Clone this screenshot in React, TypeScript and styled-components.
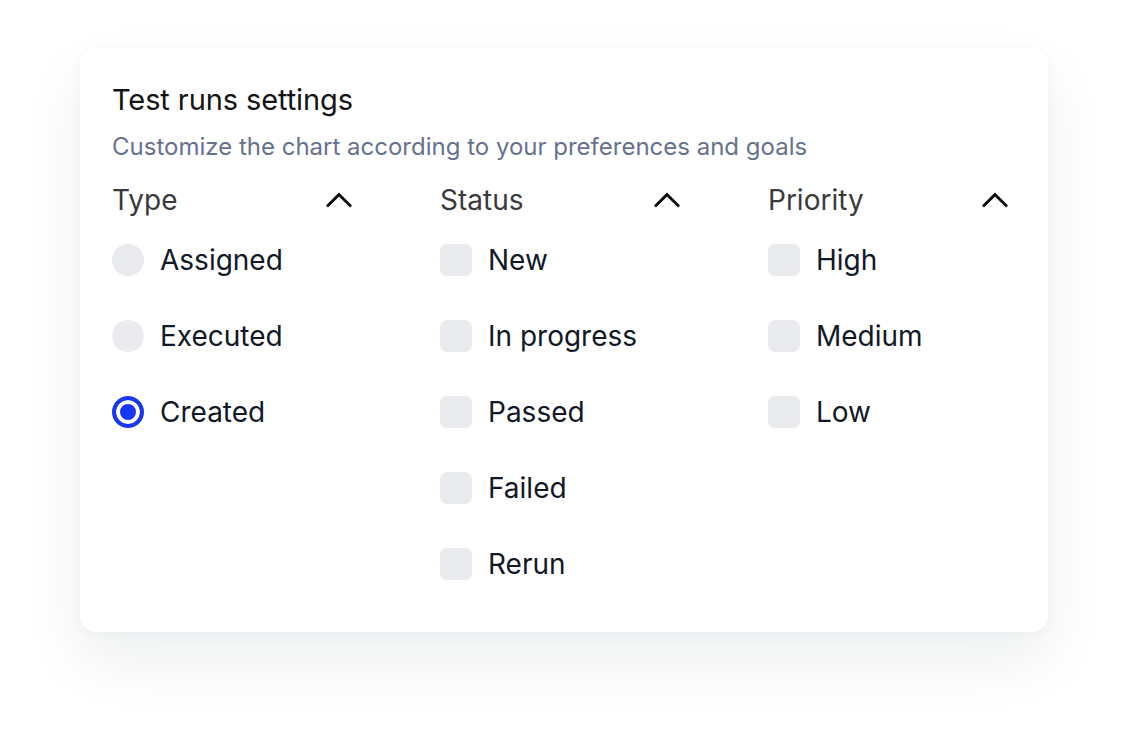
import styled, { createGlobalStyle } from "styled-components";

const GlobalStyle = createGlobalStyle`
  html, body {
    margin: 0;
    padding: 0;
    background: #ffffff;
  }
  body {
    font-family: Inter, "Noto Sans", "Liberation Sans", sans-serif;
    -webkit-font-smoothing: antialiased;
  }
`;

const Page = styled.div`
  width: 1128px;
  height: 744px;
  padding: 48px 80px 0;
  box-sizing: border-box;
`;

const Card = styled.section`
  background: #ffffff;
  border-radius: 16px;
  box-shadow: 0 28px 64px rgba(20, 24, 40, 0.07), 0 2px 12px rgba(20, 24, 40, 0.03);
  padding: 34px 40px 50px 32px;
  display: flex;
  flex-direction: column;
`;

const Title = styled.h2`
  margin: 0;
  font-size: 29px;
  line-height: 36px;
  font-weight: 400;
  color: #141416;
  letter-spacing: -0.1px;
`;

const Subtitle = styled.p`
  margin: 13px 0 0;
  font-size: 24px;
  line-height: 32px;
  font-weight: 400;
  color: #667190;
`;

const Columns = styled.div`
  margin-top: 19px;
  display: grid;
  grid-template-columns: repeat(3, 1fr);
  column-gap: 88px;
`;

const Column = styled.div`
  display: flex;
  flex-direction: column;
`;

const ColumnHeader = styled.button`
  all: unset;
  display: flex;
  align-items: center;
  justify-content: space-between;
  height: 36px;
  font-size: 28px;
  color: #3a3a3e;
  font-weight: 400;
  cursor: pointer;
`;

const OptionList = styled.div`
  margin-top: 24px;
  display: flex;
  flex-direction: column;
  gap: 40px;
`;

const Option = styled.label`
  display: flex;
  align-items: center;
  gap: 16px;
  height: 36px;
  font-size: 28px;
  color: #111827;
  cursor: pointer;
`;

const Radio = styled.span<{ $checked?: boolean }>`
  width: 32px;
  height: 32px;
  border-radius: 50%;
  box-sizing: border-box;
  flex-shrink: 0;
  background: ${(p) => (p.$checked ? "#1737f4" : "#e9eaee")};
  border: ${(p) => (p.$checked ? "4px solid #1737f4" : "none")};
  box-shadow: ${(p) => (p.$checked ? "inset 0 0 0 4px #ffffff" : "none")};
`;

const Checkbox = styled.span`
  width: 32px;
  height: 32px;
  border-radius: 7px;
  background: #e9eaee;
  flex-shrink: 0;
`;

const Chevron = () => (
  <svg width="26" height="16" viewBox="0 0 26 16" fill="none">
    <path d="M2 13.5 13 2.5l11 11" stroke="#0b0b0c" strokeWidth="3" strokeLinecap="square" strokeLinejoin="miter" />
  </svg>
);

const types = ["Assigned", "Executed", "Created"];
const statuses = ["New", "In progress", "Passed", "Failed", "Rerun"];
const priorities = ["High", "Medium", "Low"];

export default function App() {
  const selectedType = "Created";
  return (
    <>
      <GlobalStyle />
      <Page>
        <Card>
          <Title>Test runs settings</Title>
          <Subtitle>Customize the chart according to your preferences and goals</Subtitle>
          <Columns>
            <Column>
              <ColumnHeader>
                Type
                <Chevron />
              </ColumnHeader>
              <OptionList>
                {types.map((t) => (
                  <Option key={t}>
                    <Radio $checked={t === selectedType} />
                    {t}
                  </Option>
                ))}
              </OptionList>
            </Column>
            <Column>
              <ColumnHeader>
                Status
                <Chevron />
              </ColumnHeader>
              <OptionList>
                {statuses.map((s) => (
                  <Option key={s}>
                    <Checkbox />
                    {s}
                  </Option>
                ))}
              </OptionList>
            </Column>
            <Column>
              <ColumnHeader>
                Priority
                <Chevron />
              </ColumnHeader>
              <OptionList>
                {priorities.map((p) => (
                  <Option key={p}>
                    <Checkbox />
                    {p}
                  </Option>
                ))}
              </OptionList>
            </Column>
          </Columns>
        </Card>
      </Page>
    </>
  );
}
